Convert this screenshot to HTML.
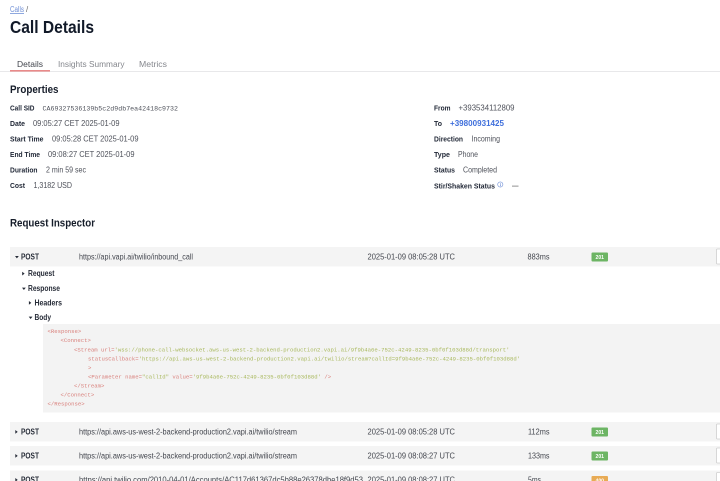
<!DOCTYPE html>
<html><head><meta charset="utf-8"><style>
html,body{margin:0;padding:0;background:#fff;width:720px;height:481px;overflow:hidden}
svg{display:block;filter:blur(.35px)}
text{font-family:"Liberation Sans",sans-serif;white-space:pre}
.l{font-size:7.6px;font-weight:700;fill:#1f2635}
.v{font-size:7.9px;fill:#4f525b}
.r{font-size:7.9px;fill:#44474f}
.h{font-size:10.8px;font-weight:700;fill:#161d2a}
.p{font-size:7.8px;font-weight:700;fill:#262b37}
.c{font-family:"Liberation Mono",monospace;font-size:5.63px;fill:#d9807c}
.g{fill:#a8b85c}
.b{font-size:5.4px;font-weight:700;fill:#fff}
</style></head><body>
<svg width="720" height="481" viewBox="0 0 720 481" xmlns="http://www.w3.org/2000/svg">
<rect width="720" height="481" fill="#fff"/>
<text x="10" y="12" font-size="7.8" fill="#6f8fd6" text-decoration="underline" textLength="14" lengthAdjust="spacingAndGlyphs">Calls</text>
<text x="26" y="12" font-size="7.8" fill="#666">/</text>
<text x="10" y="33" font-size="17.4" font-weight="700" fill="#111928" textLength="84" lengthAdjust="spacingAndGlyphs">Call Details</text>

<rect x="0" y="71" width="720" height="1" fill="#e8e8ea"/>
<rect x="10" y="70" width="40" height="1.6" fill="#e98a8a"/>
<text x="17" y="67" font-size="8.6" fill="#42454d" textLength="26" lengthAdjust="spacingAndGlyphs">Details</text>
<text x="58" y="67" font-size="8.6" fill="#85878d" textLength="66.5" lengthAdjust="spacingAndGlyphs">Insights Summary</text>
<text x="139" y="67" font-size="8.6" fill="#85878d" textLength="28" lengthAdjust="spacingAndGlyphs">Metrics</text>

<text class="h" x="10" y="93" textLength="48.5" lengthAdjust="spacingAndGlyphs">Properties</text>

<text class="l" x="10" y="110.5" textLength="24.5" lengthAdjust="spacingAndGlyphs">Call SID</text>
<text x="42.5" y="110.5" font-size="6.63" fill="#4f525b" textLength="135.5" style="font-family:'Liberation Mono',monospace">CA69327536139b5c2d9db7ea42418c9732</text>
<text class="l" x="10" y="126" textLength="15" lengthAdjust="spacingAndGlyphs">Date</text>
<text class="v" x="33" y="126" textLength="86.5" lengthAdjust="spacingAndGlyphs">09:05:27 CET 2025-01-09</text>
<text class="l" x="10" y="141.5" textLength="33.5" lengthAdjust="spacingAndGlyphs">Start Time</text>
<text class="v" x="52" y="141.5" textLength="86.5" lengthAdjust="spacingAndGlyphs">09:05:28 CET 2025-01-09</text>
<text class="l" x="10" y="157" textLength="30" lengthAdjust="spacingAndGlyphs">End Time</text>
<text class="v" x="48" y="157" textLength="86.5" lengthAdjust="spacingAndGlyphs">09:08:27 CET 2025-01-09</text>
<text class="l" x="10" y="172.5" textLength="27.5" lengthAdjust="spacingAndGlyphs">Duration</text>
<text class="v" x="46" y="172.5" textLength="40" lengthAdjust="spacingAndGlyphs">2 min 59 sec</text>
<text class="l" x="10" y="188" textLength="15" lengthAdjust="spacingAndGlyphs">Cost</text>
<text class="v" x="33.5" y="188" textLength="38.5" lengthAdjust="spacingAndGlyphs">1,3182 USD</text>

<text class="l" x="434" y="110.5" textLength="16.5" lengthAdjust="spacingAndGlyphs">From</text>
<text class="v" x="458.5" y="110.5" textLength="56" lengthAdjust="spacingAndGlyphs">+393534112809</text>
<text class="l" x="434" y="126" textLength="8" lengthAdjust="spacingAndGlyphs">To</text>
<text x="450" y="126" font-size="7.8" fill="#3f6fdc" font-weight="700" textLength="54" lengthAdjust="spacingAndGlyphs">+39800931425</text>
<text class="l" x="434" y="141.5" textLength="29" lengthAdjust="spacingAndGlyphs">Direction</text>
<text class="v" x="471.5" y="141.5" textLength="28.5" lengthAdjust="spacingAndGlyphs">Incoming</text>
<text class="l" x="434" y="157" textLength="16" lengthAdjust="spacingAndGlyphs">Type</text>
<text class="v" x="458" y="157" textLength="20" lengthAdjust="spacingAndGlyphs">Phone</text>
<text class="l" x="434" y="172.5" textLength="21" lengthAdjust="spacingAndGlyphs">Status</text>
<text class="v" x="463" y="172.5" textLength="34" lengthAdjust="spacingAndGlyphs">Completed</text>
<text class="l" x="434" y="188.5" textLength="61" lengthAdjust="spacingAndGlyphs">Stir/Shaken Status</text>
<circle cx="500.3" cy="184.5" r="2.6" fill="none" stroke="#6f8fd6" stroke-width=".6"/>
<rect x="500" y="183" width=".7" height=".7" fill="#6f8fd6"/><rect x="500" y="184.2" width=".7" height="2" fill="#6f8fd6"/>
<rect x="512" y="185.7" width="6.5" height=".8" fill="#777"/>

<text class="h" x="10" y="226.5" textLength="85" lengthAdjust="spacingAndGlyphs">Request Inspector</text>

<!-- row 1 -->
<rect x="10" y="247" width="710" height="19.5" fill="#f4f4f4"/>
<path d="M15 256h3.8l-1.9 2.4z" fill="#262b37"/>
<text class="p" x="21" y="259.5" textLength="18" lengthAdjust="spacingAndGlyphs">POST</text>
<text class="r" x="79" y="259.5" textLength="114" lengthAdjust="spacingAndGlyphs">https://api.vapi.ai/twilio/inbound_call</text>
<text class="r" x="367.5" y="259.5" textLength="87.5" lengthAdjust="spacingAndGlyphs">2025-01-09 08:05:28 UTC</text>
<text class="r" x="527.5" y="259.5" textLength="22" lengthAdjust="spacingAndGlyphs">883ms</text>
<rect x="591.5" y="252.5" width="16.5" height="9" rx="1" fill="#6db564"/>
<text class="b" x="595.5" y="259" textLength="8.5" lengthAdjust="spacingAndGlyphs">201</text>
<rect x="716.5" y="249" width="6" height="15" rx="1" fill="#fff" stroke="#cfcfcf" stroke-width=".8"/>

<path d="M22.2 271.7v3.8l2.4 -1.9z" fill="#262b37"/>
<text class="p" x="28" y="276" textLength="26.5" lengthAdjust="spacingAndGlyphs">Request</text>
<path d="M22 287.6h3.8l-1.9 2.4z" fill="#262b37"/>
<text class="p" x="28" y="291" textLength="32" lengthAdjust="spacingAndGlyphs">Response</text>
<path d="M28.9 301v3.8l2.4 -1.9z" fill="#262b37"/>
<text class="p" x="34.5" y="305.5" textLength="27.5" lengthAdjust="spacingAndGlyphs">Headers</text>
<path d="M28.7 316.6h3.8l-1.9 2.4z" fill="#262b37"/>
<text class="p" x="34.5" y="320" textLength="16.5" lengthAdjust="spacingAndGlyphs">Body</text>

<!-- code -->
<rect x="43" y="324" width="677" height="88.5" fill="#f3f3f3"/>
<text class="c" x="47.5" y="333">&lt;Response&gt;</text>
<text class="c" x="60.5" y="342">&lt;Connect&gt;</text>
<text class="c" x="74" y="351.5">&lt;Stream url=<tspan class="g">'wss://phone-call-websocket.aws-us-west-2-backend-production2.vapi.ai/9f9b4a6e-752c-4249-8235-0bf0f103d88d/transport'</tspan></text>
<text class="c" x="88" y="360.5">statusCallback=<tspan class="g">'https://api.aws-us-west-2-backend-production2.vapi.ai/twilio/stream?callId=9f9b4a6e-752c-4249-8235-0bf0f103d88d'</tspan></text>
<text class="c" x="88" y="369.5">&gt;</text>
<text class="c" x="88" y="378.5">&lt;Parameter name=<tspan class="g">"callId"</tspan> value=<tspan class="g">'9f9b4a6e-752c-4249-8235-0bf0f103d88d'</tspan> /&gt;</text>
<text class="c" x="74" y="387.5">&lt;/Stream&gt;</text>
<text class="c" x="60.5" y="396.5">&lt;/Connect&gt;</text>
<text class="c" x="47.5" y="405.5">&lt;/Response&gt;</text>

<!-- row 2 -->
<rect x="10" y="422" width="710" height="19.5" fill="#f4f4f4"/>
<path d="M15.3 430v3.8l2.4 -1.9z" fill="#262b37"/>
<text class="p" x="21" y="434.5" textLength="18" lengthAdjust="spacingAndGlyphs">POST</text>
<text class="r" x="79" y="434.5" textLength="218" lengthAdjust="spacingAndGlyphs">https://api.aws-us-west-2-backend-production2.vapi.ai/twilio/stream</text>
<text class="r" x="367.5" y="434.5" textLength="87.5" lengthAdjust="spacingAndGlyphs">2025-01-09 08:05:28 UTC</text>
<text class="r" x="528" y="434.5" textLength="21.5" lengthAdjust="spacingAndGlyphs">112ms</text>
<rect x="591.5" y="427.5" width="16.5" height="9" rx="1" fill="#6db564"/>
<text class="b" x="595.5" y="434" textLength="8.5" lengthAdjust="spacingAndGlyphs">201</text>
<rect x="716.5" y="424" width="6" height="15" rx="1" fill="#fff" stroke="#cfcfcf" stroke-width=".8"/>

<!-- row 3 -->
<rect x="10" y="446" width="710" height="19.5" fill="#f4f4f4"/>
<path d="M15.3 454v3.8l2.4 -1.9z" fill="#262b37"/>
<text class="p" x="21" y="458.5" textLength="18" lengthAdjust="spacingAndGlyphs">POST</text>
<text class="r" x="79" y="458.5" textLength="218" lengthAdjust="spacingAndGlyphs">https://api.aws-us-west-2-backend-production2.vapi.ai/twilio/stream</text>
<text class="r" x="367.5" y="458.5" textLength="87.5" lengthAdjust="spacingAndGlyphs">2025-01-09 08:08:27 UTC</text>
<text class="r" x="528" y="458.5" textLength="21.5" lengthAdjust="spacingAndGlyphs">133ms</text>
<rect x="591.5" y="451.5" width="16.5" height="9" rx="1" fill="#6db564"/>
<text class="b" x="595.5" y="458" textLength="8.5" lengthAdjust="spacingAndGlyphs">201</text>
<rect x="716.5" y="448" width="6" height="15" rx="1" fill="#fff" stroke="#cfcfcf" stroke-width=".8"/>

<!-- row 4 -->
<rect x="10" y="470.5" width="710" height="11" fill="#f4f4f4"/>
<path d="M15.3 478v3.8l2.4 -1.9z" fill="#262b37"/>
<text class="p" x="21" y="482.5" textLength="18" lengthAdjust="spacingAndGlyphs">POST</text>
<text class="r" x="79" y="482.5" textLength="284" lengthAdjust="spacingAndGlyphs">https://api.twilio.com/2010-04-01/Accounts/AC117d61367dc5b88e26378dbe18f9d53</text>
<text class="r" x="367.5" y="482.5" textLength="87.5" lengthAdjust="spacingAndGlyphs">2025-01-09 08:08:27 UTC</text>
<text class="r" x="528" y="482.5" textLength="13" lengthAdjust="spacingAndGlyphs">5ms</text>
<rect x="591.5" y="476" width="16.5" height="9" rx="1" fill="#e8ab55"/>
<text class="b" x="595.5" y="482.5" textLength="8.5" lengthAdjust="spacingAndGlyphs">400</text>
<rect x="716.5" y="472.5" width="6" height="15" rx="1" fill="#fff" stroke="#cfcfcf" stroke-width=".8"/>
</svg>
</body></html>
